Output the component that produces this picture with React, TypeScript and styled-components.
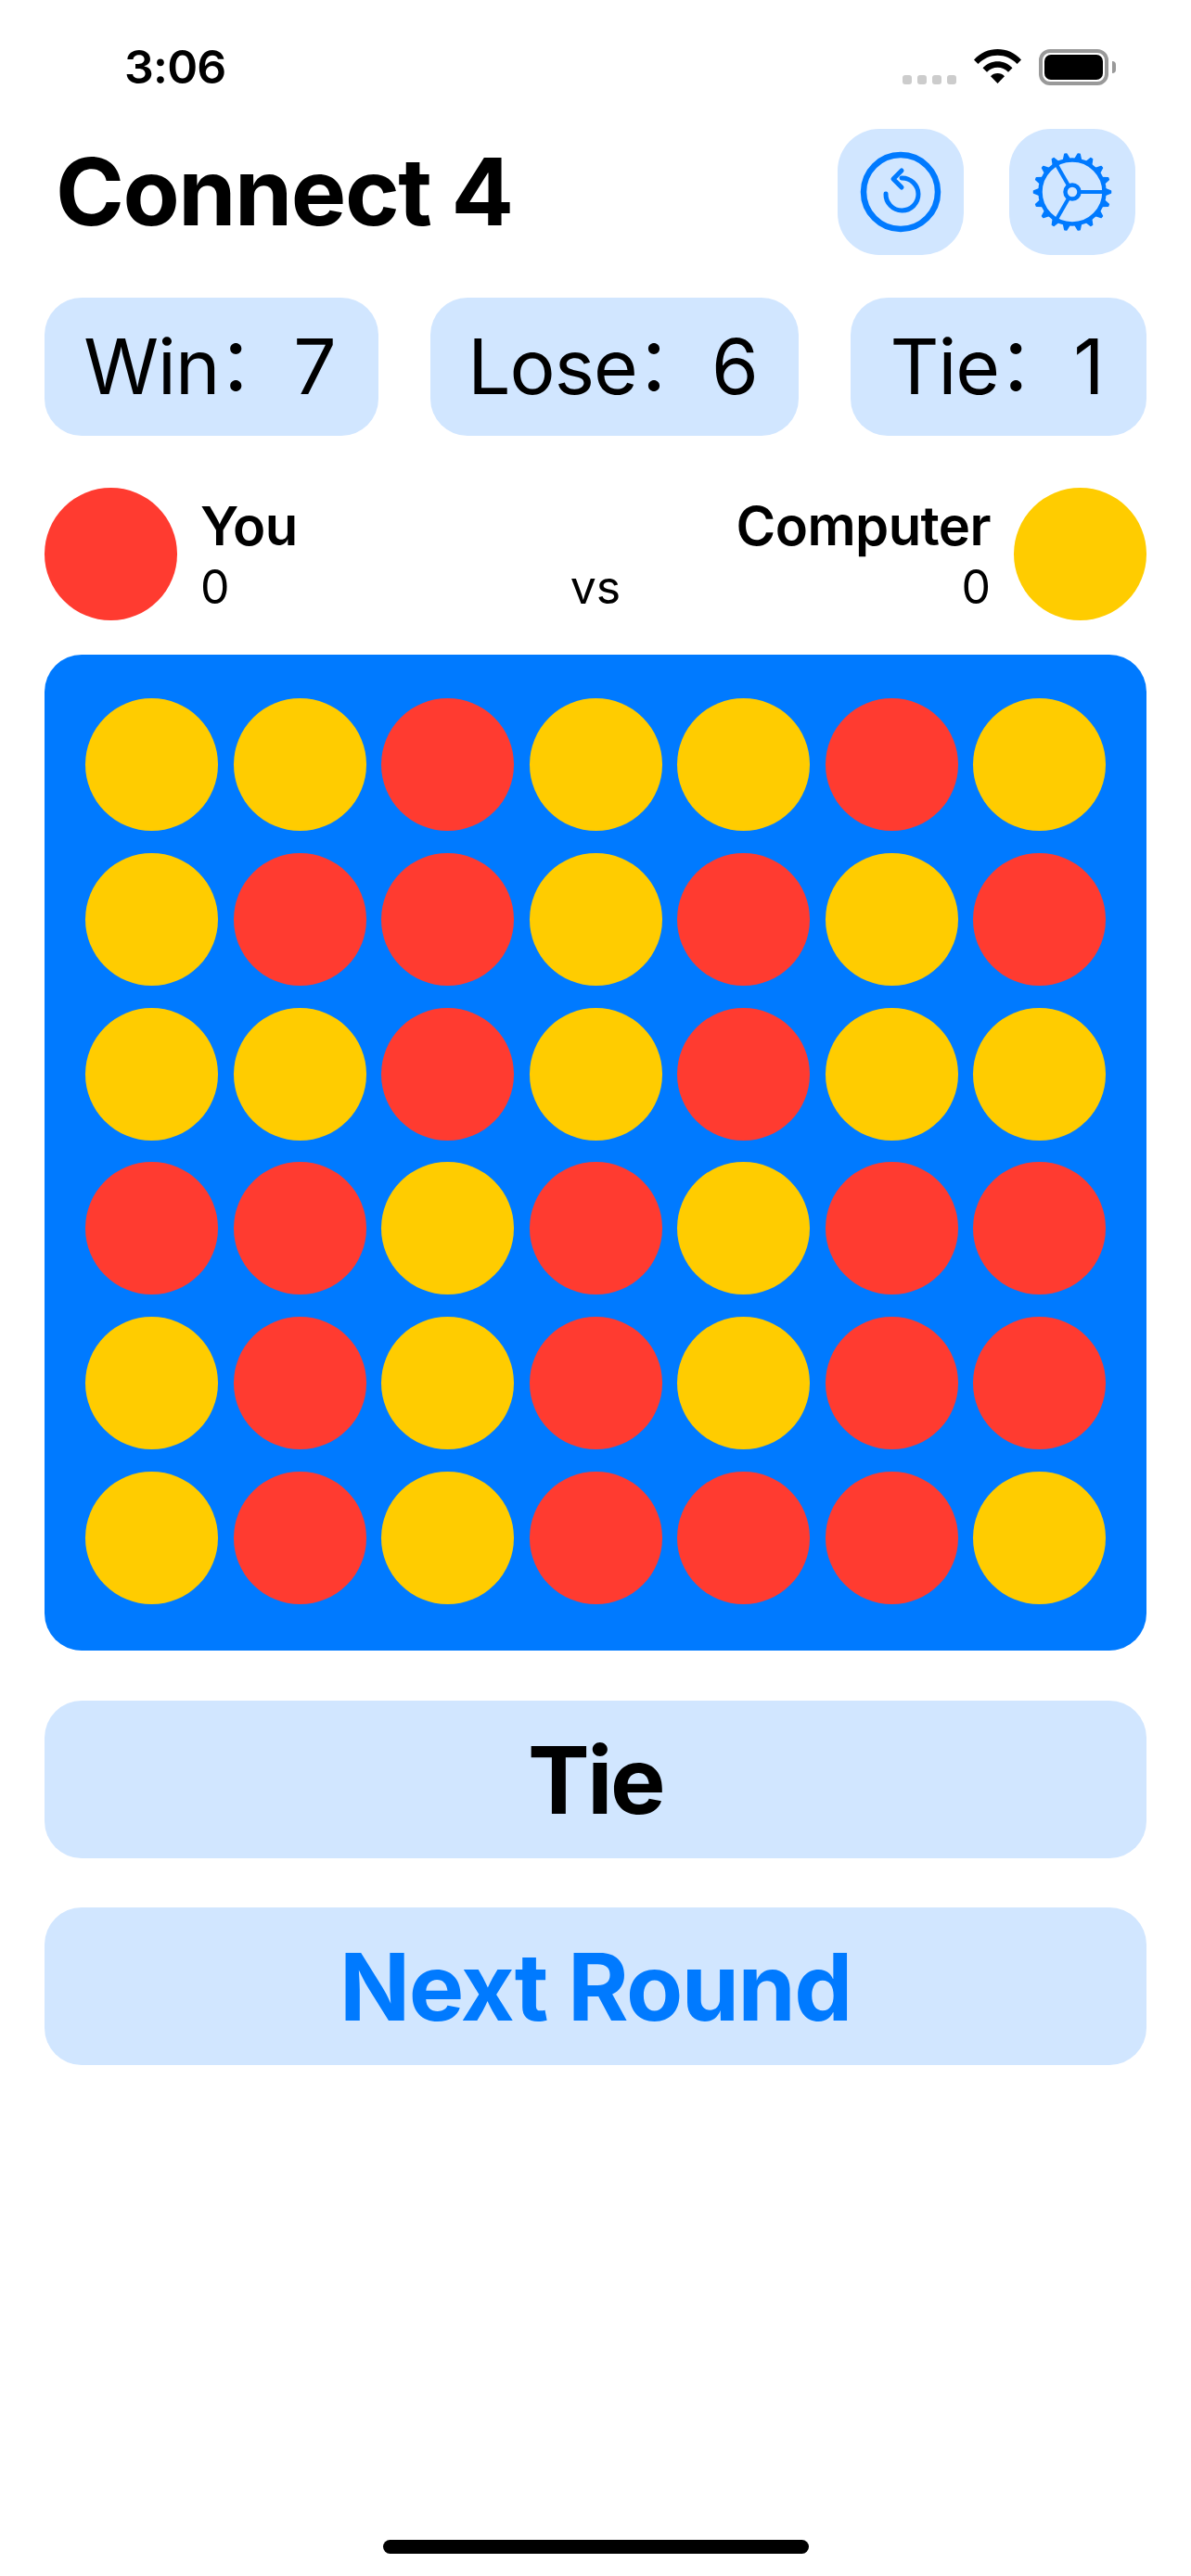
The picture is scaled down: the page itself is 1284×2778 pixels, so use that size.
import React from "react";
import styled, { createGlobalStyle } from "styled-components";

const BLUE = "#007aff";
const TINT = "#d1e6ff";
const RED = "#ff3b30";
const YELLOW = "#ffcc00";

const Global = createGlobalStyle`
  html, body { margin: 0; padding: 0; background: #fff; }
  body { font-family: Inter, "Liberation Sans", sans-serif; color: #000; }
`;

const Screen = styled.div`
  width: 1284px;
  height: 2778px;
  display: flex;
  flex-direction: column;
  position: relative;
  overflow: hidden;
`;

const StatusBar = styled.div`
  height: 139px;
  flex: none;
  display: grid;
  grid-template-columns: 1fr auto;
  padding: 53px 89px 0 134px;
  box-sizing: border-box;
  align-items: start;
`;

const Time = styled.div`
  font-size: 50px;
  line-height: 38px;
  font-weight: 600;
  letter-spacing: -0.8px;
`;

const StatusIcons = styled.div`
  display: flex;
  align-items: flex-start;
  height: 40px;
`;

const Dots = styled.div`
  display: flex;
  gap: 6px;
  margin: 28px 19px 0 0;
`;

const Dot = styled.span`
  width: 10px;
  height: 10px;
  border-radius: 3px;
  background: #cccccc;
`;

const Battery = styled.div`
  margin-left: 19px;
  width: 75px;
  height: 39px;
  box-sizing: border-box;
  border: 4px solid #999;
  border-radius: 12px;
  padding: 2px;
  position: relative;
  &::after {
    content: "";
    position: absolute;
    left: 75px;
    top: 9px;
    width: 4px;
    height: 13px;
    background: #999;
    border-radius: 0 6px 6px 0;
  }
`;

const BatteryFill = styled.div`
  height: 100%;
  background: #000;
  border-radius: 7px;
`;

const Header = styled.div`
  height: 136px;
  flex: none;
  display: flex;
  align-items: center;
  padding: 0 60px;
`;

const Title = styled.h1`
  flex: 1;
  margin: 0;
  font-size: 100px;
  line-height: 136px;
  font-weight: 700;
  letter-spacing: -1.5px;
`;

const IconButton = styled.button<{ $gap?: number }>`
  width: 136px;
  height: 136px;
  flex: none;
  border: 0;
  padding: 0;
  margin-left: ${(p) => p.$gap ?? 0}px;
  border-radius: 45px;
  background: ${TINT};
  display: flex;
  align-items: center;
  justify-content: center;
`;

const Stats = styled.div`
  display: grid;
  grid-template-columns: 360px 397px 319px;
  column-gap: 56px;
  margin: 46px 48px 0;
`;

const Stat = styled.div`
  height: 149px;
  box-sizing: border-box;
  padding-right: 4px;
  border-radius: 40px;
  background: ${TINT};
  font-size: 82px;
  letter-spacing: -1px;
  display: flex;
  align-items: center;
  justify-content: center;
  white-space: pre;
  font-weight: 400;
`;

const StatColon = styled.span`
  font-family: "Noto Sans CJK SC", sans-serif;
  font-size: 80px;
  line-height: 1;
  letter-spacing: 0;
  margin: 0 2px 20px -2px;
`;

const Players = styled.div`
  display: grid;
  grid-template-columns: 1fr auto 1fr;
  margin: 56px 48px 0;
  height: 143px;
`;

const Disc = styled.div<{ $color: string }>`
  width: 143px;
  height: 143px;
  flex: none;
  border-radius: 50%;
  background: ${(p) => p.$color};
`;

const Player = styled.div<{ $right?: boolean }>`
  display: flex;
  flex-direction: ${(p) => (p.$right ? "row-reverse" : "row")};
  gap: 25px;
  text-align: ${(p) => (p.$right ? "right" : "left")};
`;

const PlayerText = styled.div`
  display: flex;
  flex-direction: column;
`;

const PlayerName = styled.div`
  font-size: 58px;
  line-height: 70px;
  font-weight: 600;
  margin-top: 6px;
  letter-spacing: -0.6px;
`;

const PlayerScore = styled.div`
  font-size: 50px;
  line-height: 60px;
  margin-top: 1px;
`;

const Versus = styled.div`
  align-self: end;
  font-size: 50px;
  line-height: 60px;
  margin-bottom: 6px;
`;

const Board = styled.div`
  margin: 37px 48px 0;
  height: 1074px;
  box-sizing: border-box;
  padding: 47px 44px 50px;
  border-radius: 40px;
  background: ${BLUE};
  display: grid;
  grid-template-columns: repeat(7, 143px);
  grid-template-rows: repeat(6, 143px);
  justify-content: space-between;
  align-content: space-between;
`;

const Banner = styled.div<{ $link?: boolean }>`
  margin: ${(p) => (p.$link ? 53 : 54)}px 48px 0;
  height: 170px;
  border-radius: 40px;
  background: ${TINT};
  color: ${(p) => (p.$link ? BLUE : "#000")};
  font-size: 100px;
  font-weight: 700;
  letter-spacing: ${(p) => (p.$link ? -1.5 : -2.5)}px;
  display: flex;
  align-items: center;
  justify-content: center;
`;

const HomeBar = styled.div`
  position: absolute;
  left: 413px;
  bottom: 24px;
  width: 459px;
  height: 15px;
  border-radius: 8px;
  background: #000;
`;

const ReplayIcon = () => (
  <svg width="100" height="100" viewBox="-50 -50 100 100" fill="none" stroke={BLUE} strokeLinecap="round" strokeLinejoin="round">
    <circle r="40" strokeWidth="6.5" />
    <path d="M-16 2 A 17.5 17.5 0 1 0 1 -15" strokeWidth="5" />
    <path d="M1 -23 L-8 -14 L1 -5" strokeWidth="5" />
  </svg>
);

const GearIcon = () => {
  const teeth = Array.from({ length: 18 }, (_, i) => i * 20);
  return (
    <svg width="100" height="100" viewBox="-50 -50 100 100" fill="none" stroke={BLUE} strokeLinecap="round" strokeLinejoin="round">
      <circle r="34.5" strokeWidth="4.5" />
      {teeth.map((a) => (
        <path key={a} transform={`rotate(${a})`} d="M34 -4 L41.5 -1 L41.5 1 L34 4 Z" fill={BLUE} strokeWidth="1.5" />
      ))}
      <circle r="7.5" strokeWidth="4.5" />
      {[0, 120, 240].map((a) => (
        <line key={a} transform={`rotate(${a})`} x1="9" y1="0" x2="34" y2="0" strokeWidth="4" strokeLinecap="butt" />
      ))}
    </svg>
  );
};

const WifiIcon = () => (
  <svg width="51" height="37" viewBox="0 0 51 37" fill="#000">
    <path d="M25.5 0C35 0 44 3.8 51 11.5L46.5 16C40.5 10 33.5 6.8 25.5 6.8S10.5 10 4.5 16L0 11.5C7 3.8 16 0 25.5 0Z" />
    <path d="M25.5 13.2C31.5 13.2 37.2 15.7 41.5 20.3L37 24.8C33.7 21.6 29.8 19.8 25.5 19.8S17.3 21.6 14 24.8L9.5 20.3C13.8 15.7 19.5 13.2 25.5 13.2Z" />
    <path d="M25.5 26C28.5 26 31 27.1 33 29.2L25.5 37L18 29.2C20 27.1 22.5 26 25.5 26Z" />
  </svg>
);

const X = YELLOW;
const R = RED;
const GRID = [
  [X, X, R, X, X, R, X],
  [X, R, R, X, R, X, R],
  [X, X, R, X, R, X, X],
  [R, R, X, R, X, R, R],
  [X, R, X, R, X, R, R],
  [X, R, X, R, R, R, X],
];

const stats = [
  { label: "Win", value: "7" },
  { label: "Lose", value: "6" },
  { label: "Tie", value: "1" },
];

export default function App() {
  return (
    <Screen>
      <Global />
      <StatusBar>
        <Time>3:06</Time>
        <StatusIcons>
          <Dots>
            <Dot />
            <Dot />
            <Dot />
            <Dot />
          </Dots>
          <WifiIcon />
          <Battery>
            <BatteryFill />
          </Battery>
        </StatusIcons>
      </StatusBar>
      <Header>
        <Title>Connect 4</Title>
        <IconButton>
          <ReplayIcon />
        </IconButton>
        <IconButton $gap={49}>
          <GearIcon />
        </IconButton>
      </Header>
      <Stats>
        {stats.map((s) => (
          <Stat key={s.label}>
            {s.label}
            <StatColon>：</StatColon>
            {s.value}
          </Stat>
        ))}
      </Stats>
      <Players>
        <Player>
          <Disc $color={RED} />
          <PlayerText>
            <PlayerName>You</PlayerName>
            <PlayerScore>0</PlayerScore>
          </PlayerText>
        </Player>
        <Versus>vs</Versus>
        <Player $right>
          <Disc $color={YELLOW} />
          <PlayerText>
            <PlayerName>Computer</PlayerName>
            <PlayerScore>0</PlayerScore>
          </PlayerText>
        </Player>
      </Players>
      <Board>
        {GRID.flatMap((row, r) => row.map((c, i) => <Disc key={`${r}-${i}`} $color={c} />))}
      </Board>
      <Banner>Tie</Banner>
      <Banner $link>Next Round</Banner>
      <HomeBar />
    </Screen>
  );
}
